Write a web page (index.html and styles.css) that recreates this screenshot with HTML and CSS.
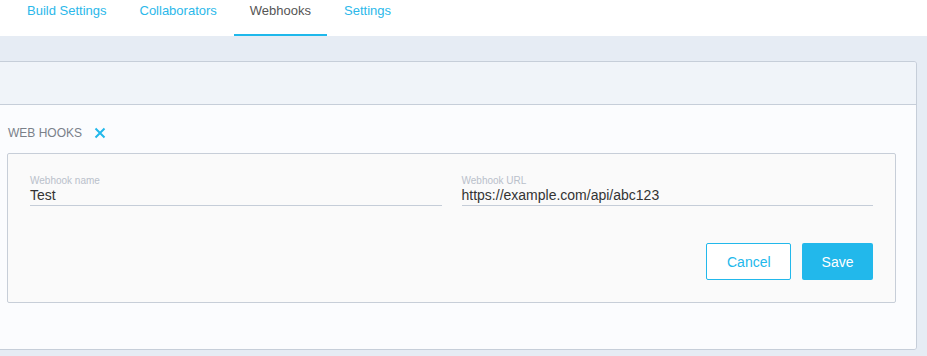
FILE: index.html
```html
<!DOCTYPE html>
<html lang="en">
<head>
    <meta charset="UTF-8">
    <meta name="viewport" content="width=device-width, initial-scale=1.0">
    <title>Webhooks</title>
    <link rel="stylesheet" href="styles.css">
</head>
<body>
    <nav class="tabs">
        <a class="tab">Build Settings</a>
        <a class="tab">Collaborators</a>
        <a class="tab active">Webhooks</a>
        <a class="tab">Settings</a>
    </nav>

    <div class="card">
        <div class="card-header"></div>
        <div class="card-body">
            <div class="section-title">
                <span>WEB HOOKS</span>
                <svg class="close" width="12" height="12" viewBox="0 0 12 12">
                    <path d="M1.5 1.5 L10.5 10.5 M10.5 1.5 L1.5 10.5" stroke="#22b8eb" stroke-width="2" fill="none"/>
                </svg>
            </div>
            <div class="hook-form">
                <div class="fields">
                    <div class="field">
                        <label>Webhook name</label>
                        <div class="value">Test</div>
                    </div>
                    <div class="field">
                        <label>Webhook URL</label>
                        <div class="value">https://example.com/api/abc123</div>
                    </div>
                </div>
                <div class="actions">
                    <button class="btn btn-outline">Cancel</button>
                    <button class="btn btn-primary">Save</button>
                </div>
            </div>
        </div>
    </div>
</body>
</html>
```

FILE: styles.css
```css
body {
    margin: 0;
    font-family: "Liberation Sans", Arial, sans-serif;
    background-color: #e6ecf4;
    height: 356px;
    overflow: hidden;
}

.tabs {
    display: flex;
    gap: 1px;
    height: 36px;
    padding-left: 11px;
    background-color: #fff;
}

.tab {
    display: block;
    height: 34px;
    padding: 0 16px;
    font-size: 13px;
    line-height: 22px;
    color: #2bb8ea;
    border-bottom: 2px solid transparent;
}

.tab.active {
    color: #555;
    border-bottom-color: #1fb8eb;
}

.card {
    margin: 25px 10px 0 -3px;
    border: 1px solid #c6ced9;
    border-radius: 3px;
    overflow: hidden;
}

.card-header {
    height: 42px;
    background-color: #f0f4f9;
    border-bottom: 1px solid #c6ced9;
}

.card-body {
    height: 223px;
    padding: 21px 20px 0 9px;
    background-color: #fbfcfe;
}

.section-title {
    display: flex;
    align-items: center;
    gap: 12px;
    margin-left: 1px;
    font-size: 12px;
    line-height: 14px;
    color: #7a8089;
}

.close {
    display: block;
}

.hook-form {
    margin-top: 13px;
    padding: 22px;
    background-color: #fafafa;
    border: 1px solid #c7ced8;
    border-radius: 2px;
}

.fields {
    display: flex;
    gap: 20px;
}

.field {
    flex: 1;
    border-bottom: 1px solid #c5cdd8;
}

.field label {
    display: block;
    font-size: 10px;
    line-height: 10px;
    padding-bottom: 1px;
    color: #b9c0ca;
}

.value {
    font-size: 14px;
    line-height: 16px;
    padding-bottom: 2px;
    color: #333;
}

.actions {
    display: flex;
    justify-content: flex-end;
    gap: 11px;
    margin-top: 37px;
}

.btn {
    height: 37px;
    padding: 0 19.5px;
    font-family: "Liberation Sans", Arial, sans-serif;
    font-size: 14px;
    border-radius: 2px;
}

.btn-outline {
    background-color: #fff;
    color: #22b8eb;
    border: 1px solid #22b8eb;
}

.btn-primary {
    background-color: #22b8eb;
    color: #fff;
    border: none;
}
```
